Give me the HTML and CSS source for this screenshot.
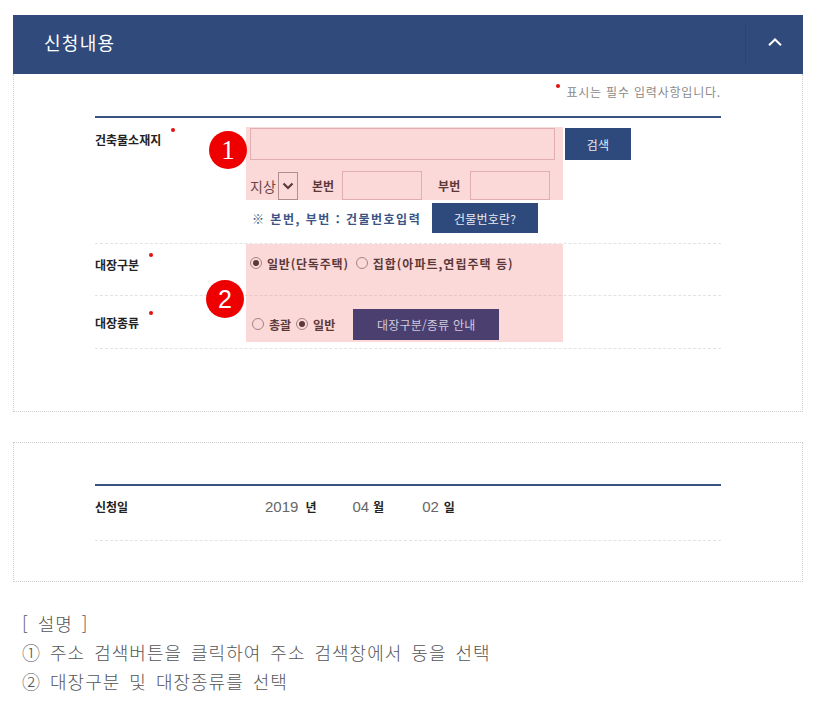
FILE: index.html
```html
<!DOCTYPE html>
<html lang="ko">
<head>
<meta charset="utf-8">
<title>신청내용</title>
<link rel="stylesheet" href="styles.css">
</head>
<body>
<div class="page">
  <section class="panel">
    <header class="panel-head">
      <h2 class="panel-title">신청내용</h2>
      <div class="toggle">
        <svg width="16" height="10" viewBox="0 0 16 10"><path d="M2 8.3 L8 2.5 L14 8.3" fill="none" stroke="#ffffff" stroke-width="2"/></svg>
      </div>
    </header>
    <div class="panel-body">
      <p class="req-note"><span class="dot dot-note"></span>표시는 필수 입력사항입니다.</p>
      <div class="form">
        <div class="row row-addr">
          <div class="label">건축물소재지<span class="dot"></span></div>
          <div class="field">
            <div class="line line-1">
              <span class="input input-wide"></span>
              <span class="btn btn-search">검색</span>
            </div>
            <div class="line line-2">
              <span class="select">지상<span class="arrow"><svg width="12" height="8" viewBox="0 0 12 8"><path d="M1.5 1.5 L6 6 L10.5 1.5" fill="none" stroke="#222" stroke-width="2.2"/></svg></span></span>
              <span class="sub-label">본번</span>
              <span class="input input-short"></span>
              <span class="sub-label sub-label-2">부번</span>
              <span class="input input-short"></span>
            </div>
            <div class="line line-3">
              <span class="hint">※ 본번, 부번 : 건물번호입력</span>
              <span class="btn btn-help">건물번호란?</span>
            </div>
          </div>
        </div>
        <div class="row row-kind">
          <div class="label">대장구분<span class="dot"></span></div>
          <div class="field">
            <span class="radio checked"></span><span class="opt">일반(단독주택)</span>
            <span class="radio"></span><span class="opt opt-wide">집합(아파트,연립주택 등)</span>
          </div>
        </div>
        <div class="row row-type">
          <div class="label">대장종류<span class="dot"></span></div>
          <div class="field">
            <span class="radio"></span><span class="opt">총괄</span>
            <span class="radio checked"></span><span class="opt">일반</span>
            <span class="btn btn-guide">대장구분/종류 안내</span>
          </div>
        </div>
      </div>
      <div class="mark mark-1"></div>
      <div class="mark mark-2"></div>
      <div class="badge badge-1">1</div>
      <div class="badge badge-2">2</div>
    </div>
  </section>

  <section class="panel panel-date">
    <div class="form">
      <div class="row row-date">
        <div class="label">신청일</div>
        <div class="field">
          <span class="num">2019</span><span class="unit">년</span>
          <span class="num num-m">04</span><span class="unit">월</span>
          <span class="num num-d">02</span><span class="unit">일</span>
        </div>
      </div>
    </div>
  </section>

  <div class="desc">
    <p>[ 설명 ]</p>
    <p>① 주소 검색버튼을 클릭하여 주소 검색창에서 동을 선택</p>
    <p>② 대장구분 및 대장종류를 선택</p>
  </div>
</div>
</body>
</html>
```

FILE: styles.css
```css
* { box-sizing: border-box; }
html, body { margin: 0; padding: 0; background: #ffffff; }
body { font-family: "Noto Sans CJK KR", "Noto Sans", sans-serif; color: #222; }

.page { width: 837px; padding: 15px 0 0 13px; }

.panel { width: 790px; }

.panel-head {
  height: 59px;
  padding-bottom: 5px;
  background: #2f4a7b;
  display: flex;
  align-items: center;
  justify-content: space-between;
}
.panel-title {
  margin: 0 0 0 31px;
  font-size: 18px;
  font-weight: 400;
  color: #ffffff;
  letter-spacing: 1.3px;
}
.toggle {
  width: 58px;
  height: 40px;
  margin-top: 5px;
  border-left: 1px solid #2a4370;
  display: flex;
  align-items: center;
  justify-content: center;
  padding-bottom: 5px;
}

.panel-body {
  position: relative;
  height: 338px;
  border: 1px dotted #cfcfcf;
  border-top: none;
  padding: 10px 0 0 81px;
}

.req-note {
  margin: 0;
  width: 626px;
  text-align: right;
  font-size: 12px;
  line-height: 16px;
  color: #8a8a8a;
  letter-spacing: 0.8px;
}
.dot {
  display: inline-block;
  width: 4px;
  height: 4px;
  border-radius: 50%;
  background: #e01010;
  vertical-align: top;
  margin: 0 0 0 10px;
  position: relative;
  top: -5px;
}
.req-note .dot-note { margin: 0 6px 0 0; top: 0; }

.form {
  width: 626px;
  margin-top: 16px;
  border-top: 2px solid #3a5283;
}
.row {
  display: flex;
  border-bottom: 1px dashed #e3e3e3;
}
.label {
  width: 155px;
  flex: none;
  font-size: 12px;
  font-weight: 700;
  line-height: 14px;
  color: #222;
}
.field { display: flex; flex-wrap: wrap; align-items: center; font-size: 12px; }

.row-addr { height: 126px; }
.row-addr .label { padding-top: 15px; }
.row-addr .field { flex-direction: column; align-items: flex-start; padding-top: 10px; }
.line { display: flex; align-items: center; }
.line-2 { margin-top: 11px; }
.line-3 { margin-top: 3px; }

.input {
  display: inline-block;
  border: 1px solid #d9c4c4;
  background: #ffffff;
}
.input-wide { width: 305px; height: 32px; }
.input-short { width: 80px; height: 29px; }

.btn {
  display: inline-flex;
  align-items: center;
  justify-content: center;
  background: #2e4a7c;
  color: #e6e9f0;
  font-size: 12px;
  letter-spacing: 0.2px;
}
.btn-search { width: 66px; height: 32px; margin-left: 10px; }
.btn-help { width: 106px; height: 30px; margin-left: 14px; }
.btn-guide {
  width: 146px;
  height: 31px;
  margin-left: 15px;
  background: #4a3f6e;
  color: #cfcadf;
  position: relative;
  z-index: 2;
}

.select {
  display: inline-flex;
  align-items: center;
  width: 52px;
  height: 28px;
  font-size: 14px;
  color: #333;
  background: #fff;
}
.select .arrow {
  margin-left: 2px;
  width: 20px;
  height: 28px;
  border: 1px solid #999;
  display: flex;
  align-items: center;
  justify-content: center;
}
.sub-label { font-size: 12px; font-weight: 700; margin: 0 8px 0 10px; }
.sub-label-2 { margin-left: 16px; margin-right: 10px; }

.hint {
  width: 168px;
  padding-left: 2px;
  font-size: 12px;
  font-weight: 700;
  color: #3b5484;
  letter-spacing: 1.5px;
  white-space: nowrap;
}

.radio {
  display: inline-block;
  width: 12px;
  height: 12px;
  border: 1px solid #888;
  border-radius: 50%;
  background: #fff;
  position: relative;
  margin-right: 5px;
}
.radio.checked::after {
  content: "";
  position: absolute;
  left: 2px; top: 2px;
  width: 6px; height: 6px;
  border-radius: 50%;
  background: #222;
}
.opt { font-weight: 700; margin-right: 5px; }
.row-kind .opt { letter-spacing: 0.8px; margin-right: 7px; }
.row-kind .opt-wide { letter-spacing: 1px; }

.row-kind { height: 52px; }
.row-kind .label { padding-top: 14px; }
.row-kind .field { align-items: flex-start; padding-top: 13px; line-height: 14px; }

.row-type { height: 53px; align-items: center; }
.row-type .label { padding-top: 2px; }
.row-type .field { padding-top: 4px; }
.row-type .radio:first-child { margin-left: 2px; }
.row-type .btn-guide { margin-left: 13px; }

.mark {
  position: absolute;
  left: 232px;
  width: 317px;
  background: rgba(246, 120, 120, 0.28);
}
.mark-1 { top: 53px; height: 73px; }
.mark-2 { top: 170px; height: 98px; }

.badge {
  position: absolute;
  width: 38px;
  height: 38px;
  border-radius: 50%;
  background: #ee0000;
  color: #fff;
  font-family: "Liberation Serif", serif;
  font-size: 27px;
  line-height: 38px;
  text-align: center;
}
.badge-1 { left: 195px; top: 57px; }
.badge-2 { left: 192px; top: 206px; font-family: "Liberation Sans", sans-serif; font-size: 25px; }

.panel-date {
  margin-top: 30px;
  height: 140px;
  border: 1px dotted #cfcfcf;
  padding: 41px 0 0 81px;
}
.panel-date .form { margin-top: 0; }
.row-date { height: 55px; align-items: flex-start; }
.row-date .label { padding-top: 14px; }
.row-date .field { padding-left: 15px; padding-top: 12px; align-items: baseline; }
.num { font-family: "Liberation Sans", sans-serif; font-size: 15px; color: #666; margin-right: 7px; }
.unit { font-size: 12px; font-weight: 700; color: #222; }
.num-m { margin-left: 36px; margin-right: 4px; }
.num-d { margin-left: 38px; margin-right: 5px; }

.desc {
  margin-top: 27px;
  padding-left: 9px;
  font-size: 18px;
  font-weight: 300;
  line-height: 29px;
  color: #555;
  letter-spacing: 1px;
  word-spacing: 3px;
}
.desc p { margin: 0; }
```
